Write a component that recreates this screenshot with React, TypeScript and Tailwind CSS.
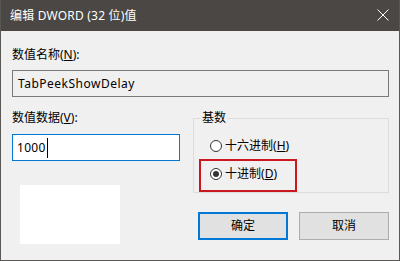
const font = { fontFamily: '"Noto Sans", "Noto Sans CJK SC", sans-serif' };

function Radio({ checked, label, hotkey }: { checked?: boolean; label: string; hotkey: string }) {
  return (
    <div className="flex h-[20px] items-center">
      <span className="flex h-[12px] w-[12px] items-center justify-center rounded-full border border-[#333] bg-white">
        {checked && <span className="h-[6px] w-[6px] rounded-full bg-[#333]" />}
      </span>
      <span className="ml-[3px] text-[12px] leading-[16px] text-black">
        {label}(<span className="underline">{hotkey}</span>)
      </span>
    </div>
  );
}

export default function App() {
  return (
    <div
      style={font}
      className="flex h-[261px] w-[400px] flex-col border-x border-b border-[#5a5855] bg-[#f0f0f0]"
    >
      {/* title bar */}
      <div className="flex h-[31px] shrink-0 items-center justify-between bg-[#4a4744] pl-[9px] pr-[10px]">
        <span className="text-[12px] leading-[16px] tracking-[0.2px] text-white">编辑 DWORD (32 位)值</span>
        <svg width="12" height="12" viewBox="0 0 12 12" className="mb-[1px]">
          <path d="M0.5 0.5L11.5 11.5M11.5 0.5L0.5 11.5" stroke="#fff" strokeWidth="1" />
        </svg>
      </div>

      <div className="flex flex-col pl-[11px] pr-[10px] pt-[16px] text-black">
        <div className="text-[12px] leading-[16px]">
          数值名称(<span className="underline">N</span>):
        </div>
        <div className="mt-[7px] flex h-[27px] items-center border border-[#7a7a7a] bg-[#f0f0f0] pl-[5px] text-[12px] tracking-[0.5px]">
          TabPeekShowDelay
        </div>

        <div className="mt-[13px] flex gap-[13px]">
          <div className="flex w-[168px] flex-col">
            <div className="text-[12px] leading-[16px]">
              数值数据(<span className="underline">V</span>):
            </div>
            <div className="mt-[8px] flex h-[27px] items-center border border-[#0078d7] bg-white pl-[4px] text-[12px]">
              <span className="border-r border-black pr-[1px] leading-[20px] tracking-[0.3px]">1000</span>
            </div>
            <div className="ml-[8px] mt-[24px] h-[59px] w-[100px] bg-white" />
          </div>

          <div className="flex w-[196px] flex-col">
            <fieldset className="border border-[#dcdcdc] pb-0">
              <legend className="ml-[6px] px-[2px] text-[12px] leading-[16px]">基数</legend>
              <div className="flex flex-col pl-[5px] pt-[10px]">
                <div className="pl-[11px]">
                  <Radio label="十六进制" hotkey="H" />
                </div>
                <div className="mt-[3px] w-[98px] border-2 border-[#c9181f] pb-[6px] pl-[9px] pt-[3px]">
                  <Radio checked label="十进制" hotkey="D" />
                </div>
              </div>
            </fieldset>
            <div className="mt-[19px] flex justify-end gap-[11px]">
              <button className="h-[28px] w-[90px] border-2 border-[#0078d7] bg-[#e1e1e1] text-[12px]">
                确定
              </button>
              <button className="h-[28px] w-[90px] border border-[#adadad] bg-[#e1e1e1] text-[12px]">
                取消
              </button>
            </div>
          </div>
        </div>
      </div>
    </div>
  );
}
